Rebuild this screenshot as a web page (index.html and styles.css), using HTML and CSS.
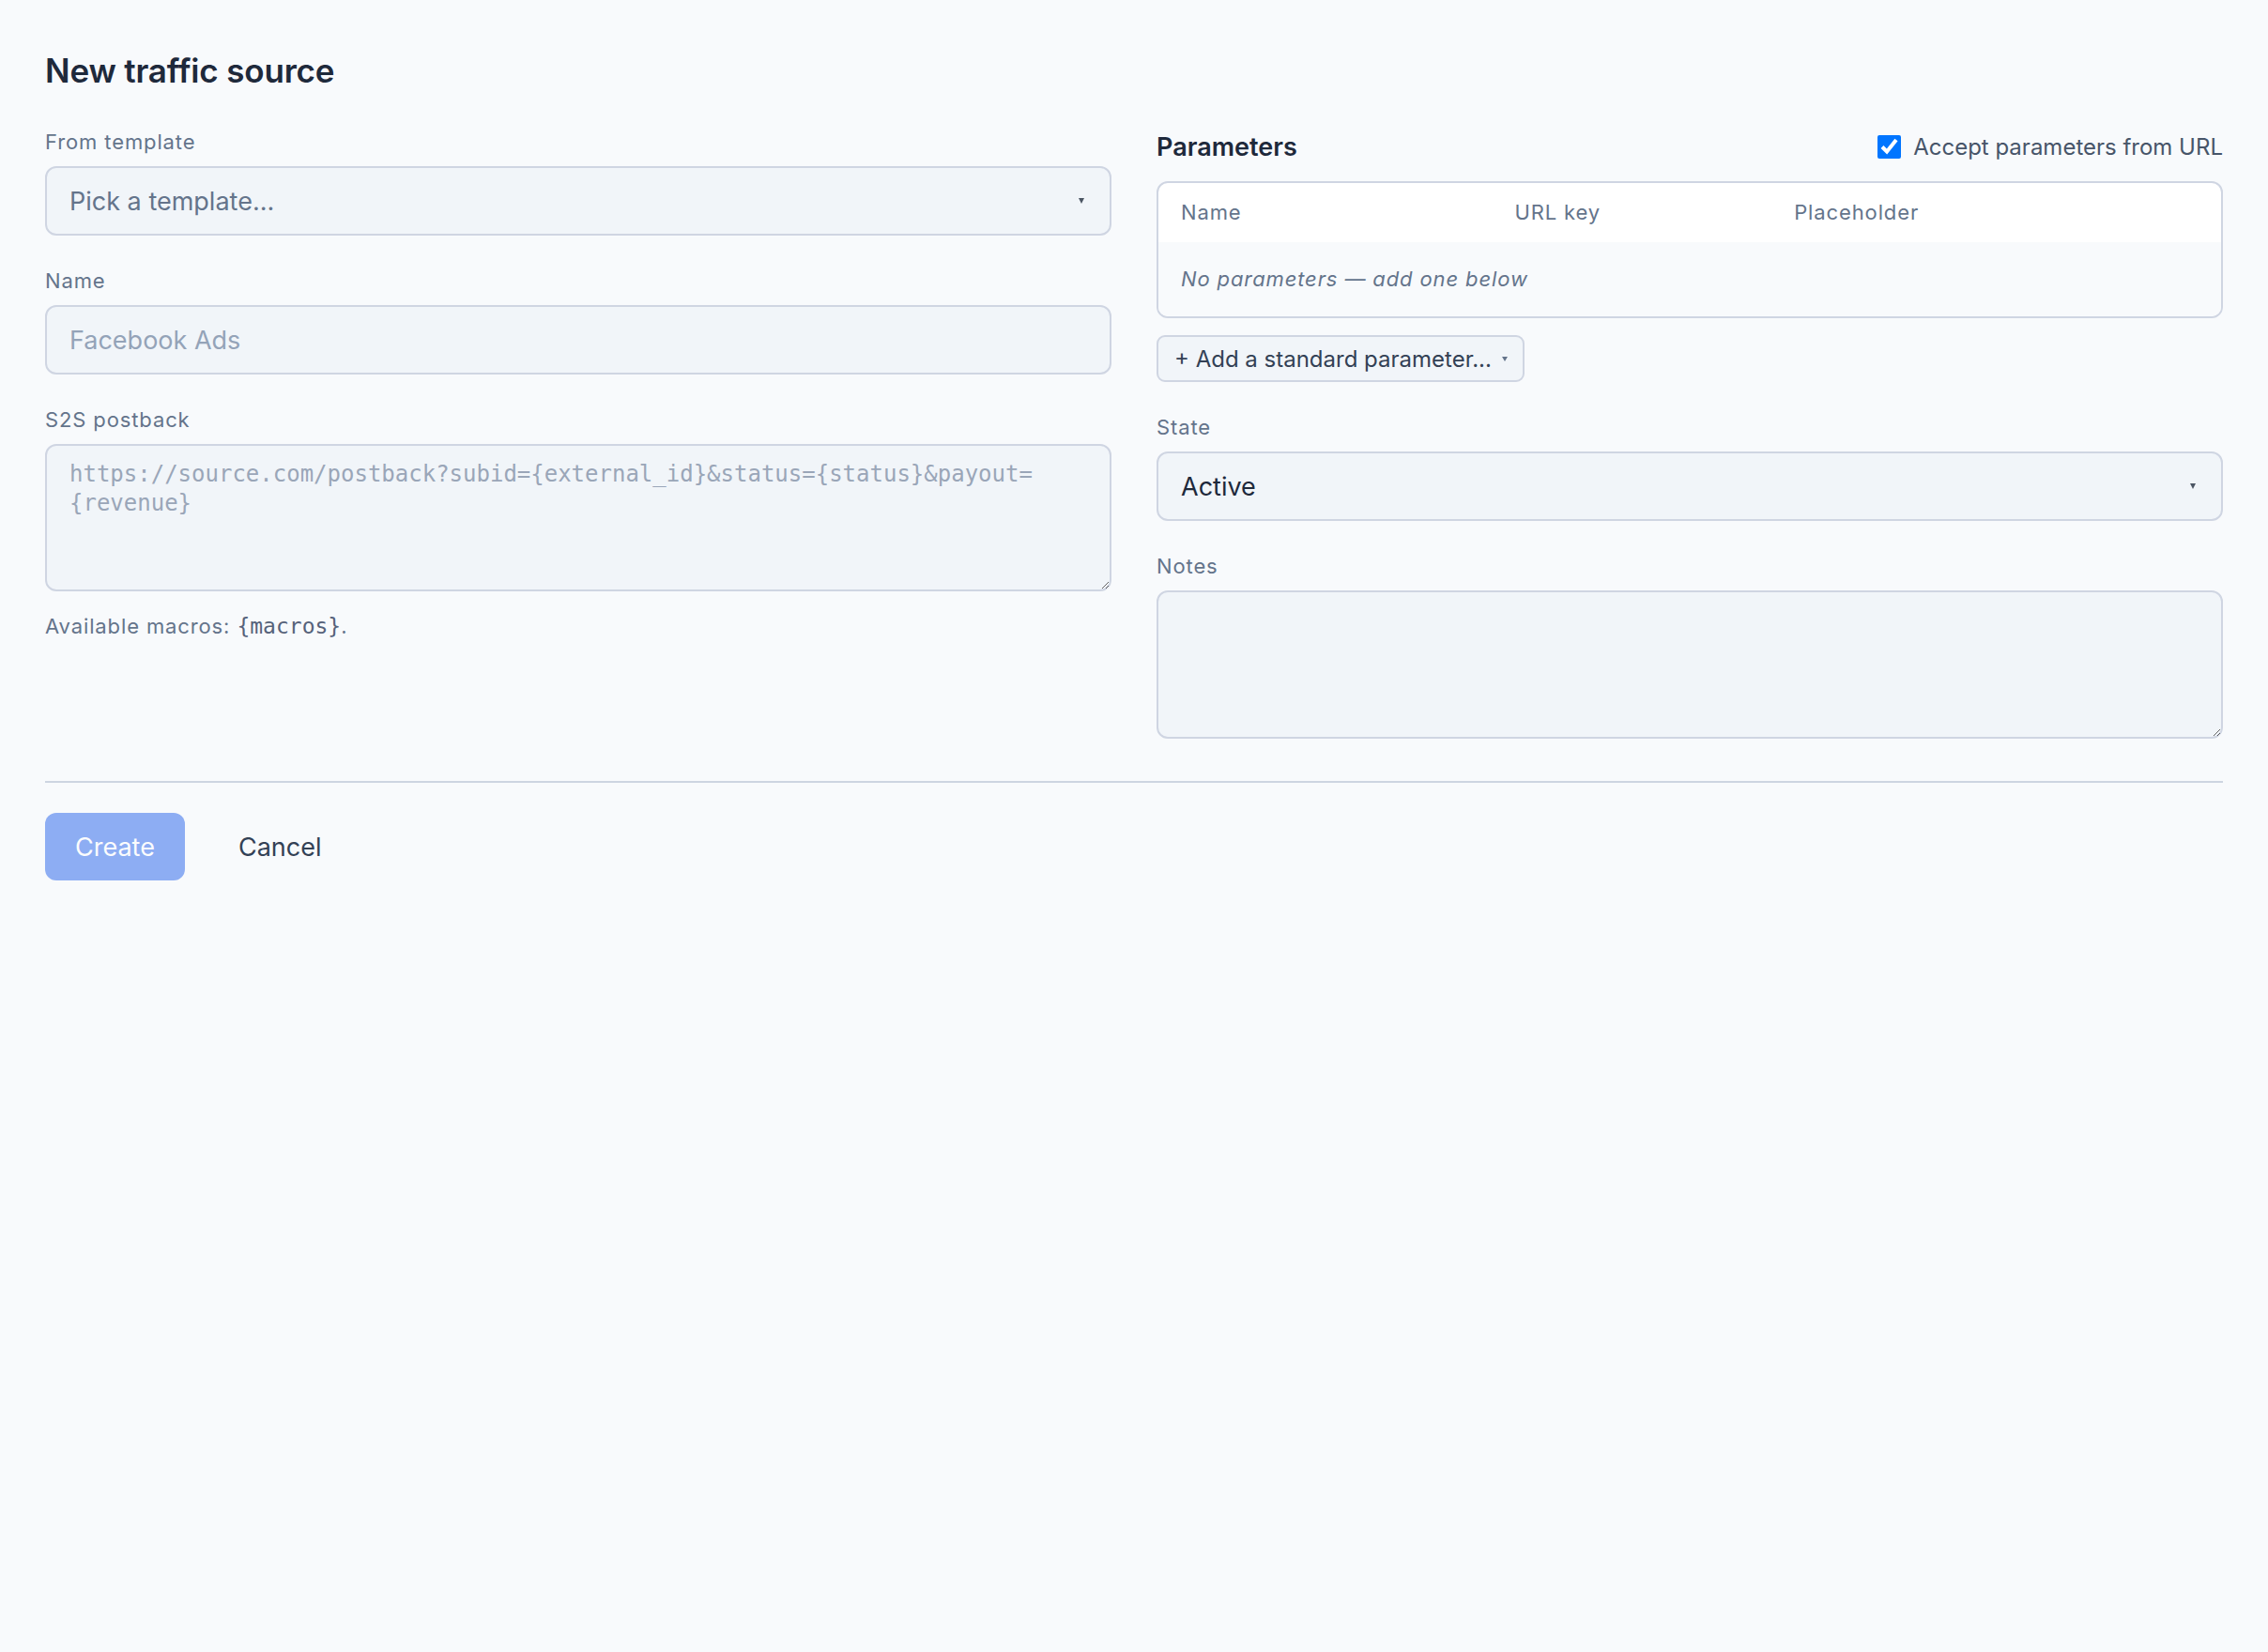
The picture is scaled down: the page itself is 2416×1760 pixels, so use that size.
FILE: index.html
```html
<!DOCTYPE html>
<html lang="en">
<head>
    <meta charset="UTF-8">
    <meta name="viewport" content="width=device-width, initial-scale=1.0">
    <title>New traffic source</title>
    <link rel="stylesheet" href="styles.css">
</head>
<body>

<div class="page">
    <h1>New traffic source</h1>

    <form class="source-form" onsubmit="return false">
        <div class="columns">
            <!-- Left column: template, name, postback -->
            <div class="col">
                <div class="field">
                    <label for="template">From template</label>
                    <div class="select-wrap">
                        <select id="template" class="is-empty">
                            <option>Pick a template...</option>
                        </select>
                    </div>
                </div>

                <div class="field">
                    <label for="sourceName">Name</label>
                    <input type="text" id="sourceName" placeholder="Facebook Ads">
                </div>

                <div class="field last">
                    <label for="postback">S2S postback</label>
                    <textarea id="postback" class="mono" placeholder="https://source.com/postback?subid={external_id}&amp;status={status}&amp;payout={revenue}"></textarea>
                    <p class="hint">Available macros: <code>{macros}</code>.</p>
                </div>
            </div>

            <!-- Right column: parameters, state, notes -->
            <div class="col">
                <div class="params-head">
                    <h2>Parameters</h2>
                    <label class="check">
                        <input type="checkbox" checked>
                        Accept parameters from URL
                    </label>
                </div>

                <div class="params-box">
                    <table>
                        <thead>
                            <tr>
                                <th class="col-name">Name</th>
                                <th class="col-key">URL key</th>
                                <th>Placeholder</th>
                            </tr>
                        </thead>
                        <tbody>
                            <tr>
                                <td colspan="3" class="empty">No parameters — add one below</td>
                            </tr>
                        </tbody>
                    </table>
                </div>

                <button type="button" class="add-param">+ Add a standard parameter... <span class="caret"></span></button>

                <div class="field">
                    <label for="state">State</label>
                    <div class="select-wrap">
                        <select id="state">
                            <option>Active</option>
                            <option>Paused</option>
                            <option>Archived</option>
                        </select>
                    </div>
                </div>

                <div class="field last">
                    <label for="notes">Notes</label>
                    <textarea id="notes" class="notes"></textarea>
                </div>
            </div>
        </div>

        <div class="actions">
            <button type="submit" class="btn-primary" disabled>Create</button>
            <a href="#" class="cancel">Cancel</a>
        </div>
    </form>
</div>

</body>
</html>
```

FILE: styles.css
```css
body {
    margin: 0;
    background-color: #f8fafc;
    font-family: Inter, "Noto Sans", sans-serif;
    color: #1e293b;
}
.page {
    padding: 48px;
}
h1 {
    margin: 0 0 33px;
    font-size: 35px;
    line-height: 54px;
    font-weight: 600;
    letter-spacing: -0.005em;
    color: #1e293b;
}
.columns {
    display: grid;
    grid-template-columns: 1fr 1fr;
    gap: 48px;
    align-items: start;
}
.field {
    margin-bottom: 32px;
}
.field.last {
    margin-bottom: 0;
}
.field > label {
    display: block;
    margin-bottom: 10px;
    font-size: 22px;
    line-height: 32px;
    letter-spacing: 0.04em;
    color: #64748b;
}
select, input[type="text"], textarea {
    display: block;
    width: 100%;
    box-sizing: border-box;
    margin: 0;
    border: 2px solid #cfd5e2;
    border-radius: 12px;
    background-color: #f1f5f9;
    font-family: Inter, "Noto Sans", sans-serif;
    font-size: 27px;
    color: #1e293b;
    outline: none;
}
select, input[type="text"] {
    height: 74px;
    padding: 0 24px;
}
select {
    appearance: none;
    -webkit-appearance: none;
}
select.is-empty {
    color: #64748b;
}
input::placeholder {
    color: #94a3b8;
}
textarea {
    height: 157px;
    padding: 15px 24px;
    line-height: 31px;
    resize: vertical;
}
textarea.mono {
    font-family: "DejaVu Sans Mono", "Liberation Mono", monospace;
    font-size: 24px;
}
textarea::placeholder {
    color: #9aa6b8;
}
textarea.notes {
    height: 158px;
}
.select-wrap {
    position: relative;
}
.select-wrap::after {
    content: "";
    position: absolute;
    right: 29px;
    top: 50%;
    margin-top: -3px;
    border-left: 3px solid transparent;
    border-right: 3px solid transparent;
    border-top: 6px solid #4b5563;
    pointer-events: none;
}
.hint {
    margin: 21px 0 0;
    font-size: 22px;
    line-height: 32px;
    letter-spacing: 0.04em;
    color: #64748b;
}
.hint code {
    font-family: "DejaVu Sans Mono", "Liberation Mono", monospace;
    font-size: 23px;
    letter-spacing: 0;
    color: #56627a;
}

/* parameters block */
.params-head {
    display: flex;
    justify-content: space-between;
    align-items: center;
    height: 42px;
    margin-bottom: 16px;
}
.params-head h2 {
    margin: 0;
    font-size: 27px;
    font-weight: 600;
    color: #1e293b;
}
.check {
    display: flex;
    align-items: center;
    gap: 13px;
    font-size: 24px;
    color: #475569;
}
.check input {
    width: 25px;
    height: 25px;
    margin: 0;
    accent-color: #0075ff;
}
.params-box {
    border: 2px solid #cfd5e2;
    border-radius: 12px;
    background-color: #fff;
    overflow: hidden;
}
.params-box table {
    width: 100%;
    border-collapse: collapse;
    table-layout: fixed;
}
.params-box th, .params-box td {
    box-sizing: border-box;
    font-size: 22px;
    line-height: 31px;
    letter-spacing: 0.04em;
    color: #64748b;
}
.params-box th {
    padding: 16px 24px;
    text-align: left;
    font-weight: 400;
}
.params-box th.col-name {
    width: 31.4%;
}
.params-box th.col-key {
    width: 26.3%;
}
.params-box td.empty {
    padding: 24px;
    font-style: italic;
    background-color: #f8fafc;
}
.add-param {
    display: inline-flex;
    align-items: center;
    gap: 11px;
    height: 50px;
    margin: 18px 0 32px;
    padding: 0 16px 0 17px;
    border: 2px solid #cfd5e2;
    border-radius: 9px;
    background-color: #f1f5f9;
    font-family: Inter, "Noto Sans", sans-serif;
    font-size: 24px;
    color: #334155;
    cursor: pointer;
}
.caret {
    width: 0;
    height: 0;
    border-left: 3px solid transparent;
    border-right: 3px solid transparent;
    border-top: 5px solid #64748b;
}

/* footer actions */
.actions {
    display: flex;
    align-items: center;
    gap: 57px;
    margin-top: 45px;
    padding-top: 32px;
    border-top: 2px solid #cdd5e1;
}
.btn-primary {
    height: 72px;
    padding: 0 32px;
    border: none;
    border-radius: 12px;
    background-color: #2563eb;
    opacity: 0.5;
    font-family: Inter, "Noto Sans", sans-serif;
    font-size: 27px;
    color: #fff;
}
.cancel {
    font-size: 27px;
    color: #334155;
    text-decoration: none;
}
```
